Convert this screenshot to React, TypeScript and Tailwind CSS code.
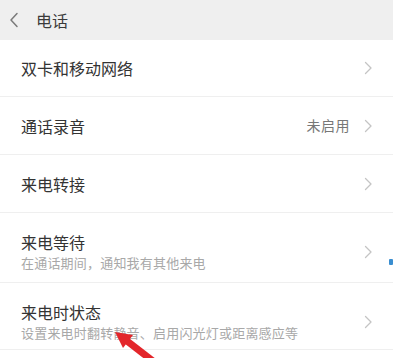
import React from 'react';

type Row = {
  title: string;
  sub?: string;
  value?: string;
  h: string;
};

const rows: Row[] = [
  { title: '双卡和移动网络', h: 'h-[57px]' },
  { title: '通话录音', value: '未启用', h: 'h-[58px]' },
  { title: '来电转接', h: 'h-[58px]' },
  { title: '来电等待', sub: '在通话期间，通知我有其他来电', h: 'h-[70px]' },
  { title: '来电时状态', sub: '设置来电时翻转静音、启用闪光灯或距离感应等', h: 'h-[67px]' },
];

const Chevron = () => (
  <svg width="9" height="14" viewBox="0 0 9 14" fill="none" className="shrink-0">
    <path d="M1.5 1.5 L7 7 L1.5 12.5" stroke="#c4c4c4" strokeWidth="1.3" strokeLinecap="round" strokeLinejoin="round" />
  </svg>
);

export default function App() {
  return (
    <div
      className="relative w-[393px] h-[358px] overflow-hidden bg-white"
      style={{ fontFamily: '"Noto Sans CJK SC", "Noto Sans", sans-serif' }}
    >
      {/* 顶部栏 */}
      <div className="h-[40px] bg-[#efefef] flex items-center pl-[9px]">
        <svg width="10" height="16" viewBox="0 0 10 16" fill="none">
          <path d="M8 1.5 L2 8 L8 14.5" stroke="#7a7a7a" strokeWidth="1.5" strokeLinecap="round" strokeLinejoin="round" />
        </svg>
        <span className="ml-[17px] text-[16px] text-[#3a3a3a] leading-none">电话</span>
      </div>

      {/* 列表 */}
      <div className="flex flex-col">
        {rows.map((r) =>
          r.sub ? (
            <div key={r.title} className={`${r.h} flex pl-[21px] pr-[20px] pt-[18px] border-b border-[#efefef]`}>
              <div className="flex-1 flex flex-col">
                <span className="text-[16px] leading-[22px] text-[#333]">{r.title}</span>
                <span className="text-[13px] tracking-[0.2px] leading-[20px] text-[#a8a8a8]">{r.sub}</span>
              </div>
              <div className="h-[42px] flex items-center">
                <Chevron />
              </div>
            </div>
          ) : (
            <div key={r.title} className={`${r.h} flex items-center pl-[21px] pr-[20px] border-b border-[#efefef]`}>
              <span className="flex-1 text-[16px] leading-[22px] text-[#333]">{r.title}</span>
              {r.value && <span className="mr-[14px] text-[14px] tracking-[0.5px] text-[#777]">{r.value}</span>}
              <Chevron />
            </div>
          )
        )}
      </div>

      {/* 蓝点 */}
      <div className="absolute left-[389px] top-[259px] w-[4px] h-[6px] bg-[#3a8ed0] rounded-[1px]" />

      {/* 红色箭头 */}
      <svg className="absolute left-[100px] top-[325px]" width="60" height="33" viewBox="0 0 60 33">
        <line x1="27" y1="16" x2="58" y2="40" stroke="#e3262b" strokeWidth="7" />
        <polygon points="15,7 23,23 33,10" fill="#e3262b" />
      </svg>
    </div>
  );
}
